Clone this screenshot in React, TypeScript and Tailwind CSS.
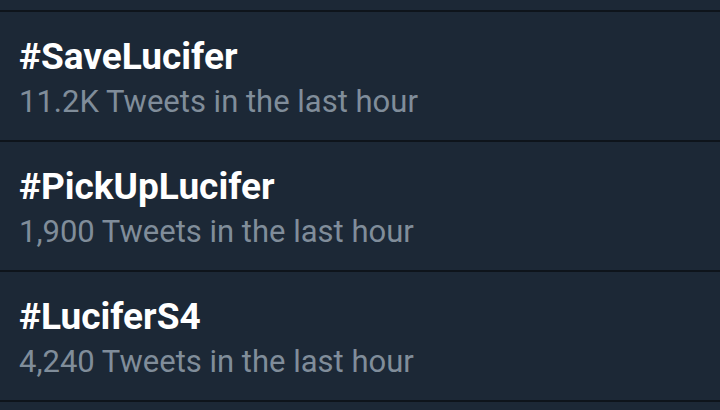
export default function App() {
  const items = [
    { tag: "#SaveLucifer", sub: "11.2K Tweets in the last hour" },
    { tag: "#PickUpLucifer", sub: "1,900 Tweets in the last hour" },
    { tag: "#LuciferS4", sub: "4,240 Tweets in the last hour" },
  ];
  return (
    <div className="w-[720px] h-[410px] overflow-hidden bg-[#1c2836] flex flex-col" style={{ fontFamily: "Roboto, 'Liberation Sans', sans-serif" }}>
      <div className="h-[10px] shrink-0" />
      {items.map((it) => (
        <div key={it.tag} className="h-[130px] shrink-0 border-t-[2px] border-[#0e141b] pl-[19px] pt-[23px] flex flex-col">
          <div className="text-white font-bold text-[37px] leading-[44px]">{it.tag}</div>
          <div className="text-[#808d9a] text-[31px] leading-[36px] mt-[5px]">{it.sub}</div>
        </div>
      ))}
      <div className="border-t-[2px] border-[#0e141b]" />
    </div>
  );
}
